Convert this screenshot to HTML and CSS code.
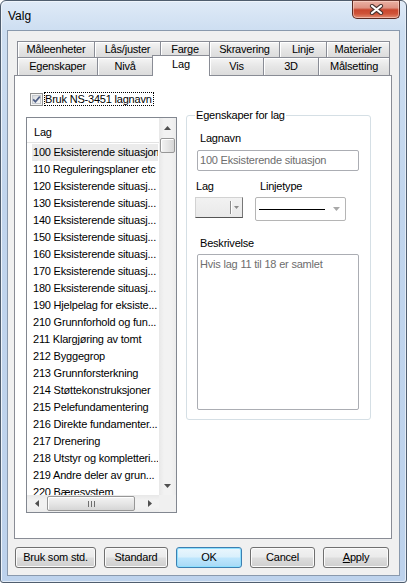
FILE: index.html
```html
<!DOCTYPE html>
<html>
<head>
<meta charset="utf-8">
<link rel="stylesheet" href="styles.css">
</head>
<body>
<div class="window">
  <div class="titlebar">
    <span class="title">Valg</span>
    <div class="close">
      <svg width="15" height="11" viewBox="0 0 15 11"><path d="M3 2 L12 9 M12 2 L3 9" stroke="#4a3430" stroke-width="4.2" stroke-linecap="round" fill="none"/><path d="M3 2 L12 9 M12 2 L3 9" stroke="#ffffff" stroke-width="2.2" stroke-linecap="round" fill="none"/></svg>
    </div>
  </div>
  <div class="client">
    <div class="tabs">
      <div class="tabrow row1">
        <div class="tab w77">Måleenheter</div>
        <div class="tab w66">Lås/juster</div>
        <div class="tab w49">Farge</div>
        <div class="tab w70">Skravering</div>
        <div class="tab w47">Linje</div>
        <div class="tab w64 last">Materialer</div>
      </div>
      <div class="tabrow row2">
        <div class="tab w80">Egenskaper</div>
        <div class="tab w55">Nivå</div>
        <div class="tab w58 sel">Lag</div>
        <div class="tab w53 after-sel">Vis</div>
        <div class="tab w55">3D</div>
        <div class="tab w72 last">Målsetting</div>
      </div>
    </div>
    <div class="panel">
      <div class="leftcol">
        <div class="chkrow">
          <svg class="chkbox" width="13" height="13" viewBox="0 0 13 13">
            <defs><linearGradient id="cg" x1="0" y1="0" x2="1" y2="1"><stop offset="0" stop-color="#d6d9dd"/><stop offset="1" stop-color="#fbfbfb"/></linearGradient></defs>
            <rect x="0.5" y="0.5" width="12" height="12" fill="#f4f4f4" stroke="#8e8f8f"/>
            <rect x="2.5" y="2.5" width="8" height="8" fill="url(#cg)" stroke="#c5c9ce"/>
            <path d="M3.2 6.4 L5.4 8.8 L9.8 3.6" stroke="#4f5f86" stroke-width="1.7" fill="none"/>
          </svg>
          <span class="chklabel">Bruk NS-3451 lagnavn</span>
        </div>
        <div class="listbox">
          <div class="lb-main">
            <div class="lb-content">
              <div class="lb-header">Lag</div>
              <div class="lb-items">
                <div class="item selrow">100 Eksisterende situasjon</div>
                <div class="item">110 Reguleringsplaner etc</div>
                <div class="item">120 Eksisterende situasj...</div>
                <div class="item">130 Eksisterende situasj...</div>
                <div class="item">140 Eksisterende situasj...</div>
                <div class="item">150 Eksisterende situasj...</div>
                <div class="item">160 Eksisterende situasj...</div>
                <div class="item">170 Eksisterende situasj...</div>
                <div class="item">180 Eksisterende situasj...</div>
                <div class="item">190 Hjelpelag for eksiste...</div>
                <div class="item">210 Grunnforhold og fun...</div>
                <div class="item">211 Klargjøring av tomt</div>
                <div class="item">212 Byggegrop</div>
                <div class="item">213 Grunnforsterkning</div>
                <div class="item">214 Støttekonstruksjoner</div>
                <div class="item">215 Pelefundamentering</div>
                <div class="item">216 Direkte fundamenter...</div>
                <div class="item">217 Drenering</div>
                <div class="item">218 Utstyr og kompletteri...</div>
                <div class="item">219 Andre deler av grun...</div>
                <div class="item">220 Bæresystem</div>
              </div>
            </div>
            <div class="vscroll">
              <div class="sb-btn vbtn"><svg width="7" height="4" viewBox="0 0 7 4"><path d="M0 4 L3.5 0 L7 4 Z" fill="#505050"/></svg></div>
              <div class="vthumb"></div>
              <div class="sb-fill"></div>
              <div class="sb-btn vbtn"><svg width="7" height="4" viewBox="0 0 7 4"><path d="M0 0 L3.5 4 L7 0 Z" fill="#505050"/></svg></div>
            </div>
          </div>
          <div class="lb-bottom">
            <div class="hscroll">
              <div class="sb-btn hbtn"><svg width="4" height="7" viewBox="0 0 4 7"><path d="M4 0 L0 3.5 L4 7 Z" fill="#505050"/></svg></div>
              <div class="hthumb"><svg width="7" height="6" viewBox="0 0 7 6"><path d="M0.5 0 V6 M3.5 0 V6 M6.5 0 V6" stroke="#6e6e6e" stroke-width="1"/></svg></div>
              <div class="sb-fill"></div>
              <div class="sb-btn hbtn"><svg width="4" height="7" viewBox="0 0 4 7"><path d="M0 0 L4 3.5 L0 7 Z" fill="#505050"/></svg></div>
            </div>
            <div class="corner"></div>
          </div>
        </div>
      </div>
      <fieldset class="group">
        <legend>Egenskaper for lag</legend>
        <div class="f-label first">Lagnavn</div>
        <div class="textbox">100 Eksisterende situasjon</div>
        <div class="lt-row">
          <div class="lt-col1">
            <div class="f-label lag">Lag</div>
            <div class="colorcombo">
              <div class="cc-sep"></div>
              <svg width="5" height="3" viewBox="0 0 5 3"><path d="M0 0 L2.5 3 L5 0 Z" fill="#8a8a8a"/></svg>
            </div>
          </div>
          <div class="lt-col2">
            <div class="f-label">Linjetype</div>
            <div class="linecombo">
              <div class="lineval"></div>
              <svg width="7" height="4" viewBox="0 0 7 4"><path d="M0 0 L3.5 4 L7 0 Z" fill="#a8a8a8"/></svg>
            </div>
          </div>
        </div>
        <div class="f-label besk">Beskrivelse</div>
        <div class="textarea">Hvis lag 11 til 18 er samlet</div>
      </fieldset>
    </div>
    <div class="buttons">
      <div class="btn b81">Bruk som std.</div>
      <div class="btn b64">Standard</div>
      <div class="btn b66 default">OK</div>
      <div class="btn b65">Cancel</div>
      <div class="btn b66"><u>A</u>pply</div>
    </div>
  </div>
</div>
</body>
</html>
```
FILE: styles.css
```css
* { box-sizing: border-box; }
html, body { margin: 0; padding: 0; background: #ffffff; }
body {
  font-family: "Liberation Sans", Arial, sans-serif;
  font-size: 11px;
  letter-spacing: -0.2px;
  color: #000;
}
.window {
  width: 407px;
  height: 583px;
  border: 1px solid #4f5d6e;
  border-radius: 6px 6px 3px 3px;
  background: linear-gradient(#dfeaf7 0px, #cddef1 30px, #c1d5ed 200px, #bdd2ec 100%);
  box-shadow: inset 1px 1px 0 #eef4fb, inset -1px -1px 0 #e3ecf7;
  display: flex;
  flex-direction: column;
  padding: 0 6px 6px;
}
.titlebar {
  height: 29px;
  display: flex;
  justify-content: space-between;
  align-items: flex-start;
  flex: none;
}
.title {
  margin: 8px 0 0 1px;
  font-size: 12px;
  line-height: 14px;
  letter-spacing: 0;
}
.close {
  width: 48px;
  height: 19px;
  margin-top: -1px;
  border: 1px solid #5a2a22;
  border-top-color: #6a3a32;
  border-radius: 0 0 5px 5px;
  background: linear-gradient(#eab1a4 0%, #de9383 40%, #c9472f 52%, #cf5439 75%, #e18d74 100%);
  box-shadow: inset 0 0 0 1px rgba(255, 220, 210, 0.55);
  display: flex;
  align-items: center;
  justify-content: center;
}
.client {
  flex: 1;
  border: 1px solid #8999ad;
  background: #f0f0f0;
  display: flex;
  flex-direction: column;
  padding-top: 10px;
}
.tabs {
  margin-left: 9px;
  display: flex;
  flex-direction: column;
}
.tabrow { display: flex; }
.tab {
  border: 1px solid #898c95;
  border-right: none;
  border-bottom: none;
  background: linear-gradient(#f5f5f5, #e6e6e6 50%, #dcdcdc);
  box-shadow: inset 1px 1px 0 #ffffff;
  text-align: center;
  white-space: nowrap;
}
.row1 .tab { height: 16px; line-height: 15px; }
.row2 .tab { height: 18px; line-height: 17px; }
.tab.last { border-right: 1px solid #898c95; }
.tab.after-sel { border-left: none; }
.tab.sel {
  background: #ffffff;
  box-shadow: none;
  border-right: 1px solid #898c95;
  height: 21px;
  margin-top: -2px;
  margin-bottom: -1px;
  line-height: 16px;
  position: relative;
  z-index: 1;
}
.w47 { width: 47px; } .w49 { width: 49px; } .w53 { width: 53px; }
.w55 { width: 55px; } .w58 { width: 58px; } .w64 { width: 64px; }
.w66 { width: 66px; } .w70 { width: 70px; } .w72 { width: 72px; }
.w77 { width: 77px; } .w80 { width: 80px; }

.panel {
  margin-left: 6px;
  width: 378px;
  height: 464px;
  border: 1px solid #898c95;
  background: #ffffff;
  display: flex;
  align-items: flex-start;
  padding: 16px 0 0 11px;
  flex: none;
}
.leftcol { width: 151px; display: flex; flex-direction: column; }
.chkrow { display: flex; align-items: center; height: 14px; }
.chkbox { margin-left: 4px; flex: none; }
.chklabel {
  margin-left: 1px;
  border: 1px dotted #000;
  padding: 0 1px 0 0;
  line-height: 12px;
  height: 14px;
  white-space: nowrap;
}
.listbox {
  margin-top: 11px;
  width: 151px;
  height: 396px;
  border: 1px solid #828790;
  background: #fff;
  display: flex;
  flex-direction: column;
}
.lb-main { display: flex; height: 377px; }
.lb-content { width: 132px; overflow: hidden; }
.lb-header {
  height: 25px;
  border-bottom: 1px solid #e3e3e3;
  padding: 8px 0 0 7px;
  line-height: 13px;
}
.lb-items { padding: 1px 0 0 5px; }
.item {
  width: 126px;
  height: 17px;
  line-height: 17px;
  padding-left: 1px;
  white-space: nowrap;
  overflow: hidden;
}
.item.selrow { background: #ebebeb; }
.vscroll {
  width: 17px;
  background: linear-gradient(to right, #e8e8e8, #f2f2f2 30%, #f2f2f2 70%, #ececec);
  display: flex;
  flex-direction: column;
}
.sb-btn { display: flex; align-items: center; justify-content: center; flex: none; }
.vbtn { height: 19px; }
.vthumb {
  margin: 1px 1px 0 1px;
  height: 15px;
  border: 1px solid #979797;
  border-radius: 2px;
  background: linear-gradient(to right, #f3f3f3, #e6e6e6 50%, #d6d6d6);
  box-shadow: inset 1px 1px 0 #fff;
  flex: none;
}
.sb-fill { flex: 1; }
.lb-bottom { display: flex; height: 17px; }
.hscroll {
  width: 132px;
  display: flex;
  background: linear-gradient(#e8e8e8, #f2f2f2 30%, #f2f2f2 70%, #ececec);
}
.hbtn { width: 19px; }
.hthumb {
  margin: 1px 0 1px 1px;
  width: 88px;
  border: 1px solid #979797;
  border-radius: 2px;
  background: linear-gradient(#f3f3f3, #e6e6e6 50%, #d6d6d6);
  box-shadow: inset 1px 1px 0 #fff;
  display: flex;
  align-items: center;
  justify-content: center;
}
.corner { width: 17px; background: #f0f0f0; }

.group {
  margin: 16px 0 0 9px;
  width: 185px;
  height: 312px;
  border: 1px solid #d5dfe5;
  border-radius: 3px;
  padding: 0 0 0 8px;
  min-width: 0;
}
.group legend {
  padding: 0 1px;
  line-height: 14px;
  font-size: 11px;
}
.f-label { line-height: 13px; margin-left: 5px; white-space: nowrap; }
.f-label.first { margin-top: 10px; }
.textbox {
  margin: 5px 0 0 2px;
  width: 162px;
  height: 21px;
  border: 1px solid #abadb3;
  border-radius: 2px;
  padding-left: 2px;
  line-height: 19px;
  color: #6d6d6d;
  white-space: nowrap;
  overflow: hidden;
}
.lt-row { display: flex; margin-top: 9px; }
.lt-col1 { width: 60px; }
.f-label.lag { margin-left: 1px; }
.colorcombo {
  margin-top: 4px;
  width: 48px;
  height: 21px;
  border: 1px solid;
  border-color: #d2d2d2 #777777 #555555 #d2d2d2;
  background: linear-gradient(#f2f2f2, #e9e9e9);
  display: flex;
  align-items: center;
  justify-content: flex-end;
  padding-right: 3px;
}
.cc-sep {
  width: 2px;
  height: 13px;
  border-left: 1px solid #8c8c8c;
  border-right: 1px solid #ffffff;
  margin-right: 2px;
}
.lt-col2 { width: 91px; }
.linecombo {
  margin-top: 4px;
  width: 91px;
  height: 24px;
  border: 1px solid #b5b5b5;
  border-radius: 2px;
  background: #fff;
  display: flex;
  align-items: center;
  padding: 0 5px 0 3px;
}
.lineval { width: 67px; height: 1px; background: #000; margin-right: 8px; }
.f-label.besk { margin-top: 16px; }
.textarea {
  margin: 4px 0 0 2px;
  width: 162px;
  height: 156px;
  border: 1px solid #abadb3;
  border-radius: 2px;
  padding: 3px 0 0 2px;
  line-height: 13px;
  color: #6d6d6d;
}

.buttons {
  display: flex;
  gap: 8px;
  margin: 8px 0 0 7px;
}
.btn {
  height: 21px;
  border: 1px solid #707070;
  border-radius: 3px;
  background: linear-gradient(#f2f2f2 0%, #ebebeb 48%, #dddddd 52%, #cfcfcf 100%);
  box-shadow: inset 0 0 0 1px #fbfbfb;
  text-align: center;
  line-height: 19px;
  white-space: nowrap;
}
.btn.default {
  border-color: #3c7fb1;
  background: linear-gradient(#eaf6fd 0%, #d9f0fc 48%, #bee6fd 52%, #a7d9f5 100%);
  box-shadow: inset 0 0 0 1px #8ee0ff;
}
.b64 { width: 64px; } .b65 { width: 65px; } .b66 { width: 66px; } .b81 { width: 81px; }
```
